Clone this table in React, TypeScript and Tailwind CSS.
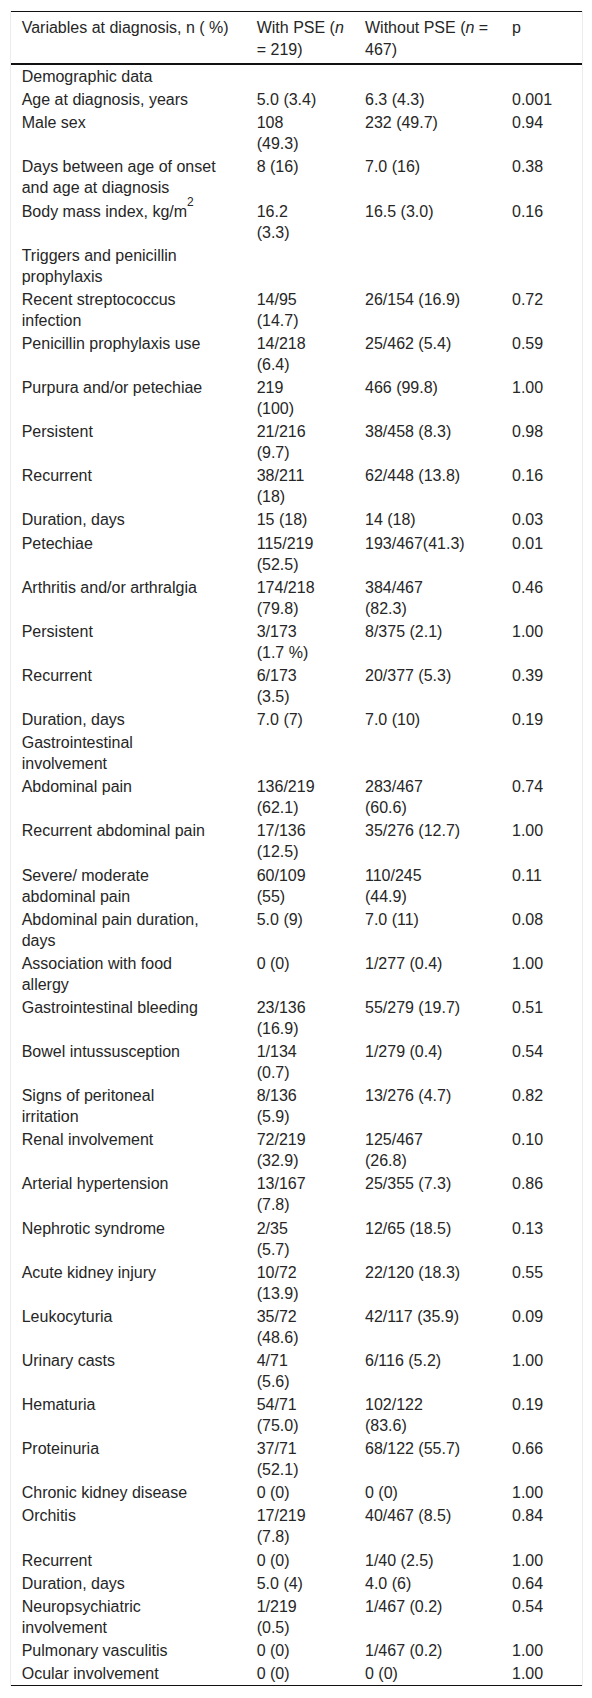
import React from 'react';

// each cell keeps its own line breaks, as printed in the source table
type Row = [string, string, string, string];

const rows: Row[] = [
    ['Demographic data', '', '', ''],
    ['Age at diagnosis, years', '5.0 (3.4)', '6.3 (4.3)', '0.001'],
    ['Male sex', '108\n(49.3)', '232 (49.7)', '0.94'],
    ['Days between age of onset\nand age at diagnosis', '8 (16)', '7.0 (16)', '0.38'],
    ['BMI', '16.2\n(3.3)', '16.5 (3.0)', '0.16'],
    ['Triggers and penicillin\nprophylaxis', '', '', ''],
    ['Recent streptococcus\ninfection', '14/95\n(14.7)', '26/154 (16.9)', '0.72'],
    ['Penicillin prophylaxis use', '14/218\n(6.4)', '25/462 (5.4)', '0.59'],
    ['Purpura and/or petechiae', '219\n(100)', '466 (99.8)', '1.00'],
    ['Persistent', '21/216\n(9.7)', '38/458 (8.3)', '0.98'],
    ['Recurrent', '38/211\n(18)', '62/448 (13.8)', '0.16'],
    ['Duration, days', '15 (18)', '14 (18)', '0.03'],
    ['Petechiae', '115/219\n(52.5)', '193/467(41.3)', '0.01'],
    ['Arthritis and/or arthralgia', '174/218\n(79.8)', '384/467\n(82.3)', '0.46'],
    ['Persistent', '3/173\n(1.7 %)', '8/375 (2.1)', '1.00'],
    ['Recurrent', '6/173\n(3.5)', '20/377 (5.3)', '0.39'],
    ['Duration, days', '7.0 (7)', '7.0 (10)', '0.19'],
    ['Gastrointestinal\ninvolvement', '', '', ''],
    ['Abdominal pain', '136/219\n(62.1)', '283/467\n(60.6)', '0.74'],
    ['Recurrent abdominal pain', '17/136\n(12.5)', '35/276 (12.7)', '1.00'],
    ['Severe/ moderate\nabdominal pain', '60/109\n(55)', '110/245\n(44.9)', '0.11'],
    ['Abdominal pain duration,\ndays', '5.0 (9)', '7.0 (11)', '0.08'],
    ['Association with food\nallergy', '0 (0)', '1/277 (0.4)', '1.00'],
    ['Gastrointestinal bleeding', '23/136\n(16.9)', '55/279 (19.7)', '0.51'],
    ['Bowel intussusception', '1/134\n(0.7)', '1/279 (0.4)', '0.54'],
    ['Signs of peritoneal\nirritation', '8/136\n(5.9)', '13/276 (4.7)', '0.82'],
    ['Renal involvement', '72/219\n(32.9)', '125/467\n(26.8)', '0.10'],
    ['Arterial hypertension', '13/167\n(7.8)', '25/355 (7.3)', '0.86'],
    ['Nephrotic syndrome', '2/35\n(5.7)', '12/65 (18.5)', '0.13'],
    ['Acute kidney injury', '10/72\n(13.9)', '22/120 (18.3)', '0.55'],
    ['Leukocyturia', '35/72\n(48.6)', '42/117 (35.9)', '0.09'],
    ['Urinary casts', '4/71\n(5.6)', '6/116 (5.2)', '1.00'],
    ['Hematuria', '54/71\n(75.0)', '102/122\n(83.6)', '0.19'],
    ['Proteinuria', '37/71\n(52.1)', '68/122 (55.7)', '0.66'],
    ['Chronic kidney disease', '0 (0)', '0 (0)', '1.00'],
    ['Orchitis', '17/219\n(7.8)', '40/467 (8.5)', '0.84'],
    ['Recurrent', '0 (0)', '1/40 (2.5)', '1.00'],
    ['Duration, days', '5.0 (4)', '4.0 (6)', '0.64'],
    ['Neuropsychiatric\ninvolvement', '1/219\n(0.5)', '1/467 (0.2)', '0.54'],
    ['Pulmonary vasculitis', '0 (0)', '1/467 (0.2)', '1.00'],
    ['Ocular involvement', '0 (0)', '0 (0)', '1.00'],
];

const cell = 'pl-[10.7px] pr-0 align-top text-left whitespace-pre-line';

const FirstCell: React.FC<{ text: string }> = ({ text }) =>
    text === 'BMI' ? (
        <>Body mass index, kg/m<sup className="text-[12px] leading-none align-[5px]">2</sup></>
    ) : (
        <>{text}</>
    );

const App: React.FC = () => {
    return (
        <div className="min-h-[1698px] bg-white pt-[11px]" style={{ fontFamily: '"Liberation Sans", Arial, sans-serif' }}>
            <div className="ml-[10px] w-[573px] border-x border-[#ececec]">
                <table className="w-[571px] table-fixed border-collapse text-[16px] leading-[21px] text-[#262626]">
                    <colgroup>
                        <col className="w-[235px]" />
                        <col className="w-[108.3px]" />
                        <col className="w-[147px]" />
                        <col />
                    </colgroup>
                    <thead>
                        <tr className="border-t border-b-2 border-t-[#111] border-b-[#111]">
                            <th className={`${cell} font-normal pt-[5px] pb-[2px] leading-[22px]`}>Variables at diagnosis, n ( %)</th>
                            <th className={`${cell} font-normal pt-[5px] pb-[2px] leading-[22px]`}>
                                With PSE (<i>n</i>{'\n'}= 219)
                            </th>
                            <th className={`${cell} font-normal pt-[5px] pb-[2px] leading-[22px]`}>
                                Without PSE (<i>n</i> ={'\n'}467)
                            </th>
                            <th className={`${cell} font-normal pt-[5px] pb-[2px] leading-[22px]`}>p</th>
                        </tr>
                    </thead>
                    <tbody className="border-b border-[#111]">
                        {rows.map((r, i) => (
                            <tr key={i}>
                                <td className={`${cell} py-[1.07px]`}><FirstCell text={r[0]} /></td>
                                <td className={`${cell} py-[1.07px]`}>{r[1]}</td>
                                <td className={`${cell} py-[1.07px]`}>{r[2]}</td>
                                <td className={`${cell} py-[1.07px]`}>{r[3]}</td>
                            </tr>
                        ))}
                    </tbody>
                </table>
            </div>
        </div>
    );
};

export default App;
